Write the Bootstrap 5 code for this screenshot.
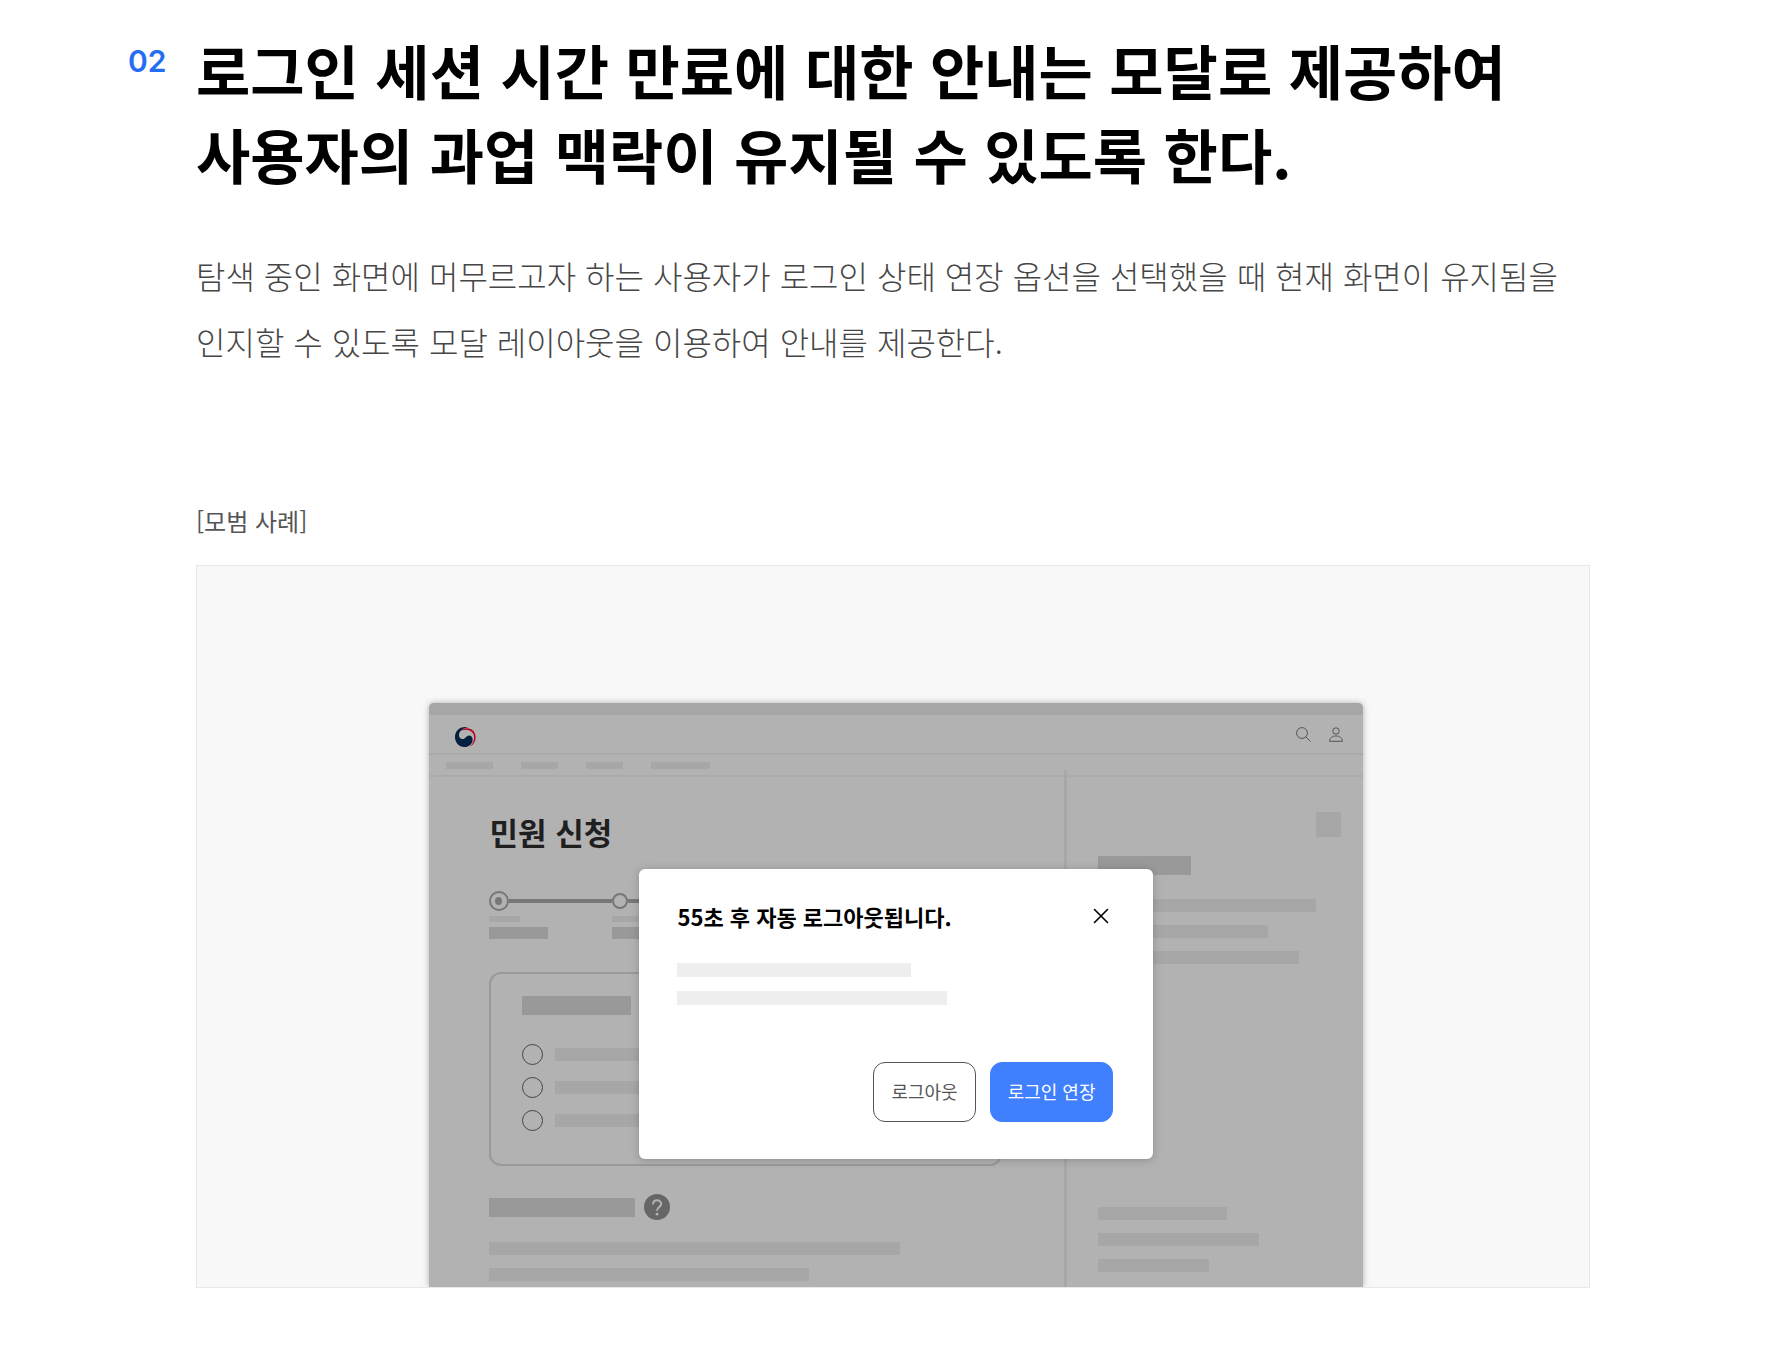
<!DOCTYPE html>
<html lang="ko">
<head>
<meta charset="utf-8">
<meta name="viewport" content="width=device-width, initial-scale=1">
<title>로그인 세션 시간 만료 안내</title>
<link href="https://cdn.jsdelivr.net/npm/bootstrap@5.3.0/dist/css/bootstrap.min.css" rel="stylesheet">
<style>
  body { font-family: "Noto Sans CJK KR", sans-serif; color: #000; background: #fff; word-break: keep-all; }
  .guide { padding: 28px 196px 68px 128px; }
  .guide-no { width: 68px; padding-top: 10px; font-family: Inter, sans-serif; font-size: 30px; line-height: 46px; font-weight: 600; color: #256ef4; }
  .guide-title { font-size: 59px; line-height: 84px; font-weight: 700; }
  .guide-body { padding-left: 68px; }
  .guide-text { margin-top: 46px; font-size: 32px; line-height: 66px; font-weight: 300; color: #464646; }
  .case-label { margin-top: 128px; margin-bottom: 25px; font-size: 24px; line-height: 38px; color: #555; }
  .case-box { padding-top: 137px; background: #f8f8f8; border: 1px solid #e8e8e8; overflow: hidden; }

  /* wireframe window */
  .win { width: 67.1%; margin-left: 16.7%; background: #b2b2b2; border-radius: 5px 5px 0 0; box-shadow: 0 0 6px rgba(0,0,0,.3); }
  .win-top { height: 12px; background: #a6a6a6; border-radius: 5px 5px 0 0; }
  .win-head { height: 40px; padding: 6px 20px 0 26px; border-bottom: 2px solid #aaa; }
  .win-head .tools { gap: 18px; padding-bottom: 6px; }
  .win-nav { height: 22px; gap: 28px; padding: 7px 17px 0; border-bottom: 2px solid #aaa; }
  .win-nav .bar { height: 7px; }
  .win-main { padding: 35px 62px 6px 60px; }
  .win-side { width: 299px; margin-top: -7px; padding: 42px 22px 0 31px; border-left: 3px solid #a7a7a7; }
  .win-title { margin-bottom: 39px; font-size: 31px; line-height: 40px; font-weight: 700; color: #1f1f1f; }

  /* placeholder bars */
  .bar { height: 13px; background: #a7a7a7; }
  .bar-h { height: 19px; background: #999; }
  .bars { gap: 13px; }
  .w37 { width: 37px; } .w47 { width: 47px; } .w59 { width: 59px; } .w93 { width: 93px; }
  .w109 { width: 109px; } .w111 { width: 111px; } .w129 { width: 129px; } .w146 { width: 146px; }
  .w161 { width: 161px; } .w170 { width: 170px; } .w201 { width: 201px; } .w218 { width: 218px; }
  .w234 { width: 234px; } .w270 { width: 270px; } .w320 { width: 320px; } .w411 { width: 411px; }
  .bar-step { width: 31px; height: 6px; margin-bottom: 5px; }
  .bar-name { width: 59px; height: 12px; background: #999; }
  .step { width: 123px; }
  .step-mark { height: 20px; margin-bottom: 5px; }
  .step-mark::after { content: ""; flex: 1; height: 4px; background: #777; }
  .form-box { height: 194px; margin-top: 33px; padding: 22px 31px; border: 2px solid #999; border-radius: 12px; }
  .opts { gap: 12px; margin-top: 29px; }
  .opts label { gap: 12px; height: 21px; }
  .opts .form-check-input { width: 21px; height: 21px; margin: 0; background: transparent; border: 1px solid #444; }
  .help-row { gap: 9px; margin-top: 28px; margin-bottom: 22px; }
  .side-square { width: 25px; height: 25px; margin-bottom: 19px; background: #a7a7a7; }
  .side-lines { margin-top: 24px; }
  .side-lower { margin-top: 243px; }
  .plain-btn { padding: 0; border: 0; background: none; line-height: 0; }

  /* session dialog */
  .dlg { left: 50%; top: 166px; width: 514px; transform: translateX(-50%); padding: 27px 40px 37px 38px; background: #fff; border-radius: 6px; box-shadow: 0 1px 8px rgba(0,0,0,.22); }
  .dlg-title { font-size: 22px; line-height: 40px; font-weight: 700; }
  .dlg .bar { height: 14px; background: #eee; }
  .dlg .bars { gap: 14px; margin-top: 27px; margin-bottom: 57px; }
  .dlg-btns { gap: 14px; }
  .dlg-btns .btn { height: 60px; padding: 0 17px 2px; border-radius: 12px; font-size: 18px; line-height: 28px; }
  .btn-out { color: #555; border-color: #555; background: #fff; }
  .btn-keep { color: #fff; border-color: #4080ff; background: #4080ff; }
</style>
<script src="https://cdn.jsdelivr.net/npm/bootstrap@5.3.0/dist/js/bootstrap.bundle.min.js"></script>
</head>
<body>
<main class="guide">
  <header class="d-flex">
    <span class="guide-no flex-shrink-0">02</span>
    <h1 class="guide-title mb-0">로그인 세션 시간 만료에 대한 안내는 모달로 제공하여<br>사용자의 과업 맥락이 유지될 수 있도록 한다.</h1>
  </header>
  <div class="guide-body">
    <p class="guide-text mb-0">탐색 중인 화면에 머무르고자 하는 사용자가 로그인 상태 연장 옵션을 선택했을 때 현재 화면이 유지됨을 인지할 수 있도록 모달 레이아웃을 이용하여 안내를 제공한다.</p>
    <p class="case-label">[모범 사례]</p>
    <figure class="case-box mb-0">
      <div class="win position-relative">
        <div class="win-top"></div>
        <div class="win-head d-flex align-items-center justify-content-between">
          <svg width="21" height="20" viewBox="0 0 63 60" aria-hidden="true">
            <path fill="#b8001f" d="M13 15C24 0 46 0 56 13C67 29 62 49 45 59C58 46 61 29 53 18C44 6 25 5 13 15Z"/>
            <path fill="#04203d" d="M40 1C14-4 0 13 0 30C0 48 13 60 28 60C42 60 53 50 53 38C53 30 47 25 40 26C32 27 32 36 23 36C15 36 12 31 12 25C12 11 25 3 40 1Z"/>
          </svg>
          <div class="tools d-flex align-items-center">
            <button class="plain-btn" type="button" aria-label="검색"><svg width="15" height="15" viewBox="0 0 15 15" fill="none" stroke="#555"><circle cx="6" cy="6" r="5.4"/><path d="M10 10L14.5 14.5"/></svg></button>
            <button class="plain-btn" type="button" aria-label="내 정보"><svg width="14" height="15" viewBox="0 0 14 15" fill="none" stroke="#555"><circle cx="7" cy="4" r="3.2"/><path d="M.6 14.3C.6 11 3.2 9 7 9S13.4 11 13.4 14.3Z" stroke-linejoin="round"/></svg></button>
          </div>
        </div>
        <div class="win-nav d-flex align-items-start">
          <div class="bar w47"></div><div class="bar w37"></div><div class="bar w37"></div><div class="bar w59"></div>
        </div>
        <div class="d-flex">
          <div class="win-main flex-fill">
            <h2 class="win-title">민원 신청</h2>
            <div class="d-flex">
              <div class="step">
                <div class="step-mark d-flex align-items-center"><svg width="20" height="20" viewBox="0 0 20 20"><circle cx="10" cy="10" r="9" fill="none" stroke="#777" stroke-width="2"/><ellipse cx="9.500" cy="10" rx="3.500" ry="4" fill="#777"/></svg></div>
                <div class="bar bar-step"></div><div class="bar-name"></div>
              </div>
              <div class="step">
                <div class="step-mark d-flex align-items-center"><svg width="16" height="16" viewBox="0 0 16 16"><circle cx="8" cy="8" r="7" fill="none" stroke="#777" stroke-width="2"/></svg></div>
                <div class="bar bar-step"></div><div class="bar-name"></div>
              </div>
            </div>
            <div class="form-box">
              <div class="bar-h w109"></div>
              <div class="opts d-flex flex-column">
                <label class="d-flex align-items-center"><input class="form-check-input" type="radio" name="kind" aria-label="항목 1"><span class="bar w201"></span></label>
                <label class="d-flex align-items-center"><input class="form-check-input" type="radio" name="kind" aria-label="항목 2"><span class="bar w201"></span></label>
                <label class="d-flex align-items-center"><input class="form-check-input" type="radio" name="kind" aria-label="항목 3"><span class="bar w201"></span></label>
              </div>
            </div>
            <div class="help-row d-flex align-items-center">
              <div class="bar-h w146"></div>
              <button class="plain-btn" type="button" aria-label="도움말"><svg width="26" height="26" viewBox="0 0 26 26" fill="none"><circle cx="13" cy="13" r="13" fill="#666"/><path d="M9 10.500C9 4.800 17.200 5.200 17.200 10C17.200 13.200 13 13 13 16.800" stroke="#b2b2b2" stroke-width="2"/><circle cx="13" cy="20.200" r="1.400" fill="#b2b2b2"/></svg></button>
            </div>
            <div class="bars d-flex flex-column"><div class="bar w411"></div><div class="bar w320"></div></div>
          </div>
          <div class="win-side flex-shrink-0">
            <div class="side-square ms-auto"></div>
            <div class="bar-h w93"></div>
            <div class="bars side-lines d-flex flex-column"><div class="bar w218"></div><div class="bar w170"></div><div class="bar w201"></div></div>
            <div class="bars side-lower d-flex flex-column"><div class="bar w129"></div><div class="bar w161"></div><div class="bar w111"></div></div>
          </div>
        </div>

        <section class="dlg position-absolute" role="dialog" aria-labelledby="dlgTitle">
          <div class="d-flex align-items-center justify-content-between">
            <h3 class="dlg-title mb-0" id="dlgTitle">55초 후 자동 로그아웃됩니다.</h3>
            <button class="plain-btn me-1" type="button" aria-label="닫기"><svg width="16" height="16" viewBox="0 0 16 16" stroke="#000" stroke-width="1.600" stroke-linecap="round"><path d="M1.500 1.500L14.500 14.500M14.500 1.500L1.500 14.500"/></svg></button>
          </div>
          <div class="bars d-flex flex-column"><div class="bar w234"></div><div class="bar w270"></div></div>
          <div class="dlg-btns d-flex justify-content-end">
            <button class="btn btn-out" type="button">로그아웃</button>
            <button class="btn btn-keep" type="button">로그인 연장</button>
          </div>
        </section>
      </div>
    </figure>
  </div>
</main>
</body>
</html>
